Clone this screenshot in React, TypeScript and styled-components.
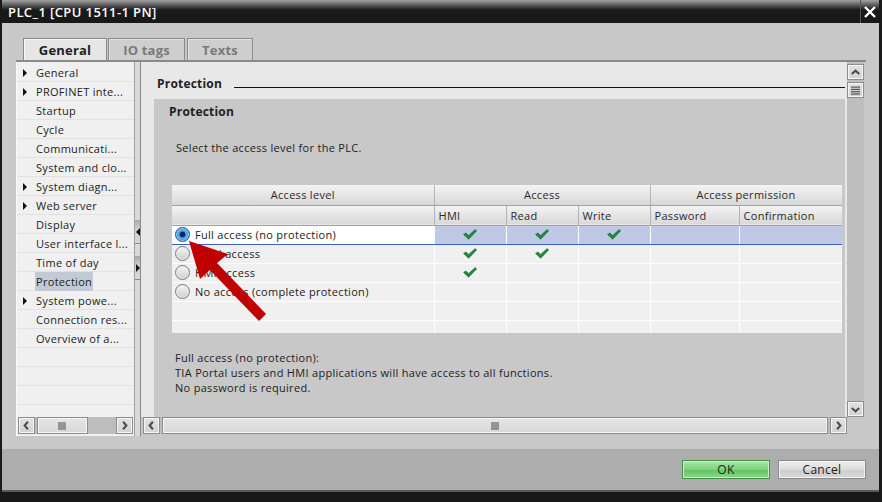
import React from 'react';
import styled, { createGlobalStyle } from 'styled-components';

const FONT = `"Open Sans", "DejaVu Sans", sans-serif`;

const GlobalStyle = createGlobalStyle`
  html, body {
    margin: 0;
    padding: 0;
    background: #c8c8c8;
  }
  body {
    font-family: ${FONT};
    font-size: 11px;
    letter-spacing: 0.3px;
    color: #222;
  }
`;

const Window = styled.div`
  position: relative;
  width: 882px;
  height: 502px;
  box-sizing: border-box;
  display: flex;
  flex-direction: column;
  border-left: 2px solid #1a1a1a;
  border-right: 3px solid #1a1a1a;
  background: #c8c8c8;
  overflow: hidden;
`;

const TitleBar = styled.div`
  height: 23px;
  flex: none;
  display: flex;
  align-items: center;
  background: linear-gradient(#a4a4a4 0, #6a6a6a 4px, #1a1a1a 10px, #181818 100%);
`;

const Title = styled.div`
  flex: 1;
  padding-left: 6px;
  padding-top: 1px;
  color: #fff;
  font-size: 13px;
  font-weight: 600;
  letter-spacing: 0.4px;
`;

const CloseButton = styled.div`
  width: 18px;
  height: 23px;
  display: flex;
  align-items: center;
  justify-content: center;
  border-left: 1px solid #555;
`;

const Body = styled.div`
  flex: 1;
  display: flex;
  flex-direction: column;
  padding: 15px 13px 13px 14px;
`;

const TabRow = styled.div`
  height: 22px;
  display: flex;
  gap: 1px;
  padding-left: 7px;
`;

const Tab = styled.div<{ $active?: boolean; $w: number }>`
  width: ${(p) => p.$w}px;
  box-sizing: border-box;
  display: flex;
  align-items: center;
  justify-content: center;
  font-size: 13px;
  font-weight: 700;
  letter-spacing: 0.2px;
  color: ${(p) => (p.$active ? '#222' : '#7a7a7a')};
  background: ${(p) => (p.$active ? '#e6e6e6' : '#cecece')};
  border: 1px solid #8a8a8a;
  border-bottom: none;
  box-shadow: inset 1px 1px 0 ${(p) => (p.$active ? '#f6f6f6' : '#e2e2e2')};
  margin-right: ${(p) => (p.$active ? 0 : 1)}px;
`;

const Frame = styled.div`
  height: 376px;
  box-sizing: border-box;
  display: flex;
  border-top: 2px solid #8a8a8a;
`;

const NavPanel = styled.div`
  width: 118px;
  display: flex;
  flex-direction: column;
  background: #f0f0f0;
  border-left: 1px solid #fafafa;
  box-sizing: border-box;
  padding-bottom: 2px;
`;

const NavList = styled.div`
  flex: 1;
  padding-top: 1px;
  background: repeating-linear-gradient(to bottom, #f0f0f0 0 18px, #e2e2e2 18px 19px);
  background-position: 0 1px;
`;

const NavRow = styled.div`
  height: 19px;
  display: flex;
  align-items: center;
  padding-left: 6px;
  white-space: nowrap;
  color: #222;
`;

const ArrowSlot = styled.span`
  width: 13px;
  flex: none;
  display: flex;
  align-items: center;
`;

const Triangle = styled.span<{ $dir?: 'left' | 'right' }>`
  width: 0;
  height: 0;
  border-top: 4px solid transparent;
  border-bottom: 4px solid transparent;
  ${(p) =>
    p.$dir === 'left' ? 'border-right: 4px solid #111;' : 'border-left: 4px solid #111;'}
`;

const NavLabel = styled.span<{ $selected?: boolean }>`
  display: inline-block;
  line-height: 19px;
  padding: 0 1px;
  margin-left: -1px;
  background: ${(p) => (p.$selected ? '#c2cbd5' : 'transparent')};
`;

const HScroll = styled.div<{ $ml?: number; $mr?: number }>`
  height: 17px;
  display: flex;
  gap: 2px;
  margin: 0 ${(p) => p.$mr ?? 0}px 0 ${(p) => p.$ml ?? 0}px;
  background: #bdbdbd;
`;

const ScrollBtn = styled.div<{ $h?: number }>`
  width: 17px;
  height: ${(p) => p.$h ?? 17}px;
  flex: none;
  box-sizing: border-box;
  display: flex;
  align-items: center;
  justify-content: center;
  border: 1px solid #8c8c8c;
  box-shadow: inset 0 0 0 1px #f6f6f6;
  background: linear-gradient(#e2e2e2, #d2d2d2);
`;

const Thumb = styled.div<{ $w?: number }>`
  ${(p) => (p.$w ? `width: ${p.$w}px;` : 'flex: 1;')}
  box-sizing: border-box;
  display: flex;
  align-items: center;
  justify-content: center;
  border: 1px solid #8c8c8c;
  box-shadow: inset 0 0 0 1px #f6f6f6;
  background: linear-gradient(#e6e6e6, #d8d8d8);
`;

const Track = styled.div`
  flex: 1;
`;

const Splitter = styled.div`
  width: 7px;
  box-sizing: border-box;
  display: flex;
  flex-direction: column;
  border-left: 1px solid #a0a0a0;
  border-right: 1px solid #8a8a8a;
  background: #dadada;
  padding-top: 158px;
  gap: 12px;
`;

const SplitHandle = styled.div`
  height: 23px;
  display: flex;
  align-items: center;
  justify-content: center;
  background: linear-gradient(#a8a8a8, #cfcfcf 40%, #d8d8d8);
  border-bottom: 1px solid #8a8a8a;
`;

const RightArea = styled.div`
  flex: 1;
  display: grid;
  grid-template-columns: 1fr 17px;
  grid-template-rows: 1fr 17px;
  padding: 0 2px 2px 0;
`;

const ContentPane = styled.div`
  display: flex;
  flex-direction: column;
  background: #e8e8e8;
  overflow: hidden;
`;

const PaneHeader = styled.div`
  height: 37px;
  flex: none;
  box-sizing: border-box;
  display: flex;
  align-items: center;
  padding: 5px 2px 0 16px;
`;

const PaneTitle = styled.div`
  font-size: 12px;
  font-weight: 700;
  letter-spacing: 0.2px;
  color: #222;
`;

const Rule = styled.div`
  flex: 1;
  height: 1px;
  background: #111;
  margin: 9px 0 0 12px;
`;

const Section = styled.div`
  flex: 1;
  margin: 0 2px 0 13px;
  background: #c8c8c8;
`;

const SectionTitle = styled.div`
  height: 26px;
  line-height: 26px;
  padding-left: 15px;
  font-size: 12px;
  font-weight: 700;
  letter-spacing: 0.2px;
  color: #222;
`;

const Intro = styled.div`
  margin-top: 15px;
  padding-left: 22px;
  line-height: 16px;
`;

const TableBox = styled.div`
  margin: 29px 3px 0 18px;
  height: 148px;
  overflow: hidden;
  background: #f0f0f0;
`;

const Table = styled.table`
  width: 670px;
  table-layout: fixed;
  border-collapse: collapse;
`;

const HeadCell = styled.th<{ $center?: boolean }>`
  height: 20px;
  box-sizing: border-box;
  padding: 0 4px;
  font-weight: 400;
  color: #2a2a2a;
  text-align: ${(p) => (p.$center ? 'center' : 'left')};
  white-space: nowrap;
  background: linear-gradient(#f4f4f4, #e4e4e4 55%, #d8d8d8);
  border-right: 1px solid #b4b4b4;
  border-bottom: 1px solid #a2a2a2;
`;

const Row = styled.tr<{ $selected?: boolean }>`
  height: 19px;
  td {
    border-right: 1px solid #fff;
    border-bottom: 1px solid #fff;
    background: ${(p) => (p.$selected ? '#bfc8e6' : '#f0f0f0')};
    ${(p) => (p.$selected ? 'border-top: 1px solid #3b62c6; border-bottom: 1px solid #3b62c6;' : '')}
  }
  td:first-child {
    background: ${(p) => (p.$selected ? '#fff' : '#f0f0f0')};
  }
`;

const Cell = styled.td`
  padding: 0;
  height: 18px;
  text-align: center;
  vertical-align: middle;
`;

const LevelCell = styled.div`
  display: flex;
  align-items: center;
  gap: 5px;
  padding-left: 3px;
  white-space: nowrap;
  text-align: left;
`;

const Radio = styled.span<{ $on?: boolean }>`
  width: 15px;
  height: 15px;
  flex: none;
  box-sizing: border-box;
  border-radius: 50%;
  border: 1px solid ${(p) => (p.$on ? '#245a92' : '#7c7c7c')};
  background: ${(p) =>
    p.$on
      ? 'radial-gradient(circle at 50% 50%, #0b2b60 0 2.6px, #5fb0ea 3.4px, #3c8ed6 70%, #2d6fb0 100%)'
      : 'linear-gradient(#f4f4f4, #cfcfcf)'};
  box-shadow: inset 0 0 0 1px ${(p) => (p.$on ? '#a6d6f6' : '#ededed')};
`;

const Description = styled.div`
  margin-top: 17px;
  padding-left: 21px;
  line-height: 15px;
`;

const VScroll = styled.div`
  display: flex;
  flex-direction: column;
  gap: 2px;
  padding-top: 2px;
  background: #bebebe;
`;

const Corner = styled.div`
  background: #c8c8c8;
`;

const Footer = styled.div`
  height: 41px;
  flex: none;
  display: flex;
  align-items: center;
  justify-content: flex-end;
  gap: 8px;
  padding-right: 13px;
  background: #adadad;
  border-bottom: 2px solid #5a5a5a;
`;

const DialogButton = styled.div<{ $primary?: boolean }>`
  width: 88px;
  height: 19px;
  box-sizing: border-box;
  display: flex;
  align-items: center;
  justify-content: center;
  font-size: 12px;
  color: #222;
  border: 1px solid ${(p) => (p.$primary ? '#4d8a4d' : '#8a8a8a')};
  box-shadow: inset 0 0 0 1px ${(p) => (p.$primary ? '#c6f0c6' : '#f4f4f4')};
  background: ${(p) =>
    p.$primary
      ? 'linear-gradient(#a8e6a8, #7cd27c 50%, #62c262 51%, #8ad88a)'
      : 'linear-gradient(#f0f0f0, #dcdcdc 50%, #cdcdcd 51%, #d8d8d8)'};
`;

const BottomEdge = styled.div`
  height: 10px;
  flex: none;
  background: #181818;
`;

const Overlay = styled.svg`
  position: absolute;
  left: -2px;
  top: 0;
  pointer-events: none;
`;

type Dir = 'left' | 'right' | 'up' | 'down';

const chevrons: Record<Dir, string> = {
  left: '9.5,4 6,8 9.5,12',
  right: '6.5,4 10,8 6.5,12',
  up: '4,9.5 8,6 12,9.5',
  down: '4,6.5 8,10 12,6.5',
};

const Chevron = ({ dir }: { dir: Dir }) => (
  <svg width="15" height="15" viewBox="0 0 16 16">
    <polyline points={chevrons[dir]} fill="none" stroke="#4c4c4c" strokeWidth="2.2" />
  </svg>
);

const Grip = () => (
  <svg width="9" height="8" viewBox="0 0 9 8">
    {[0.5, 2.5, 4.5, 6.5].map((x) => (
      <rect key={x} x={x} y="0" width="1" height="8" fill="#4a4a4a" />
    ))}
  </svg>
);

const MenuLines = () => (
  <svg width="9" height="9" viewBox="0 0 9 9">
    {[0.5, 2.8, 5.1, 7.4].map((y) => (
      <rect key={y} x="0" y={y} width="9" height="1.2" fill="#555" />
    ))}
  </svg>
);

const Check = () => (
  <svg width="14" height="11" viewBox="0 0 14 11" style={{ display: 'block', margin: '0 auto' }}>
    <path
      d="M0.6 5.4 L3 4.1 L5.6 6.6 L12.2 0.6 L13.6 1.9 L5.6 10.2 Z"
      fill="#1f8d3b"
      stroke="#0e5e24"
      strokeWidth="0.6"
    />
  </svg>
);

const navItems: { label: string; arrow?: boolean; selected?: boolean }[] = [
  { label: 'General', arrow: true },
  { label: 'PROFINET inte...', arrow: true },
  { label: 'Startup' },
  { label: 'Cycle' },
  { label: 'Communicati...' },
  { label: 'System and clo...' },
  { label: 'System diagn...', arrow: true },
  { label: 'Web server', arrow: true },
  { label: 'Display' },
  { label: 'User interface l...' },
  { label: 'Time of day' },
  { label: 'Protection', selected: true },
  { label: 'System powe...', arrow: true },
  { label: 'Connection res...' },
  { label: 'Overview of a...' },
];

const levels = [
  { label: 'Full access (no protection)', checks: [true, true, true] },
  { label: 'Read access', checks: [true, true, false] },
  { label: 'HMI access', checks: [true, false, false] },
  { label: 'No access (complete protection)', checks: [false, false, false] },
];

export default function App() {
  return (
    <>
      <GlobalStyle />
      <Window>
        <TitleBar>
          <Title>PLC_1 [CPU 1511-1 PN]</Title>
          <CloseButton>
            <svg width="12" height="12" viewBox="0 0 12 12">
              <path d="M1 1 L11 11 M11 1 L1 11" stroke="#fff" strokeWidth="2.4" />
            </svg>
          </CloseButton>
        </TitleBar>

        <Body>
          <TabRow>
            <Tab $active $w={84}>General</Tab>
            <Tab $w={77}>IO tags</Tab>
            <Tab $w={66}>Texts</Tab>
          </TabRow>

          <Frame>
            <NavPanel>
              <NavList>
                {navItems.map((item) => (
                  <NavRow key={item.label}>
                    <ArrowSlot>{item.arrow && <Triangle />}</ArrowSlot>
                    <NavLabel $selected={item.selected}>{item.label}</NavLabel>
                  </NavRow>
                ))}
              </NavList>
              <HScroll $ml={1} $mr={1}>
                <ScrollBtn>
                  <Chevron dir="left" />
                </ScrollBtn>
                <Thumb $w={51}>
                  <Grip />
                </Thumb>
                <Track />
                <ScrollBtn>
                  <Chevron dir="right" />
                </ScrollBtn>
              </HScroll>
            </NavPanel>

            <Splitter>
              <SplitHandle>
                <Triangle $dir="left" />
              </SplitHandle>
              <SplitHandle>
                <Triangle />
              </SplitHandle>
            </Splitter>

            <RightArea>
              <ContentPane>
                <PaneHeader>
                  <PaneTitle>Protection</PaneTitle>
                  <Rule />
                </PaneHeader>
                <Section>
                  <SectionTitle>Protection</SectionTitle>
                  <Intro>Select the access level for the PLC.</Intro>
                  <TableBox>
                    <Table>
                      <colgroup>
                        <col style={{ width: 262 }} />
                        <col style={{ width: 72 }} />
                        <col style={{ width: 72 }} />
                        <col style={{ width: 72 }} />
                        <col style={{ width: 89 }} />
                        <col style={{ width: 103 }} />
                      </colgroup>
                      <thead>
                        <tr>
                          <HeadCell $center>Access level</HeadCell>
                          <HeadCell $center colSpan={3}>
                            Access
                          </HeadCell>
                          <HeadCell $center colSpan={2}>
                            Access permission
                          </HeadCell>
                        </tr>
                        <tr>
                          <HeadCell />
                          <HeadCell>HMI</HeadCell>
                          <HeadCell>Read</HeadCell>
                          <HeadCell>Write</HeadCell>
                          <HeadCell>Password</HeadCell>
                          <HeadCell>Confirmation</HeadCell>
                        </tr>
                      </thead>
                      <tbody>
                        {levels.map((lvl, i) => (
                          <Row key={lvl.label} $selected={i === 0}>
                            <Cell>
                              <LevelCell>
                                <Radio $on={i === 0} />
                                {lvl.label}
                              </LevelCell>
                            </Cell>
                            {lvl.checks.map((c, j) => (
                              <Cell key={j}>{c && <Check />}</Cell>
                            ))}
                            <Cell />
                            <Cell />
                          </Row>
                        ))}
                        {[0, 1].map((k) => (
                          <Row key={`empty-${k}`}>
                            <Cell />
                            <Cell />
                            <Cell />
                            <Cell />
                            <Cell />
                            <Cell />
                          </Row>
                        ))}
                      </tbody>
                    </Table>
                  </TableBox>
                  <Description>
                    Full access (no protection):
                    <br />
                    TIA Portal users and HMI applications will have access to all functions.
                    <br />
                    No password is required.
                  </Description>
                </Section>
              </ContentPane>

              <VScroll>
                <ScrollBtn $h={16}>
                  <Chevron dir="up" />
                </ScrollBtn>
                <ScrollBtn $h={16}>
                  <MenuLines />
                </ScrollBtn>
                <Track />
                <ScrollBtn $h={16}>
                  <Chevron dir="down" />
                </ScrollBtn>
              </VScroll>

              <HScroll $ml={2}>
                <ScrollBtn>
                  <Chevron dir="left" />
                </ScrollBtn>
                <Thumb>
                  <Grip />
                </Thumb>
                <ScrollBtn>
                  <Chevron dir="right" />
                </ScrollBtn>
              </HScroll>
              <Corner />
            </RightArea>
          </Frame>
        </Body>

        <Footer>
          <DialogButton $primary>OK</DialogButton>
          <DialogButton>Cancel</DialogButton>
        </Footer>
        <BottomEdge />

        <Overlay width="882" height="502" viewBox="0 0 882 502">
          <polygon
            points="189,241 228,254 217,263 266,314 259,321 210,270 200,279"
            fill="#c00000"
          />
        </Overlay>
      </Window>
    </>
  );
}
